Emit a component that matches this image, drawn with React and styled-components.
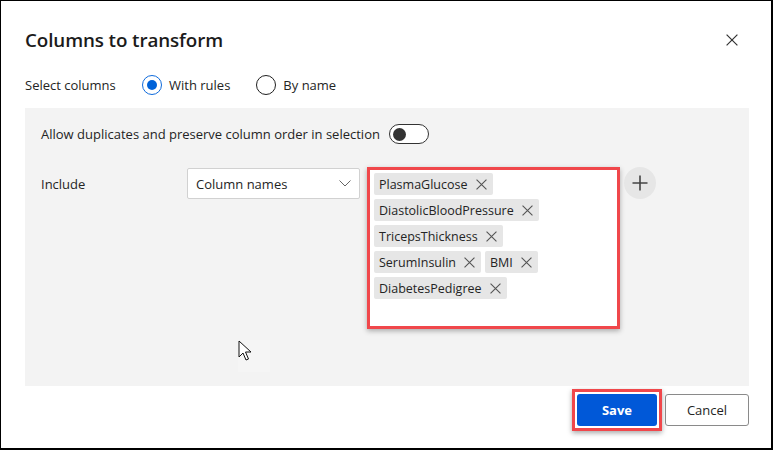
import styled, { createGlobalStyle } from 'styled-components';

const GlobalStyle = createGlobalStyle`
  html, body {
    margin: 0;
    padding: 0;
    background: #ffffff;
  }
  body {
    font-family: "Open Sans", "Noto Sans", "Liberation Sans", sans-serif;
    color: #242424;
  }
`;

const Frame = styled.div`
  box-sizing: border-box;
  width: 773px;
  height: 450px;
  border-top: 1px solid #000;
  border-left: 1px solid #000;
  border-right: 2px solid #000;
  border-bottom: 2px solid #000;
  padding: 26px 22px 0 24px;
  display: flex;
  flex-direction: column;
  background: #fff;
`;

const Header = styled.div`
  display: flex;
  align-items: center;
  justify-content: space-between;
  height: 26px;
`;

const Title = styled.h1`
  margin: 0;
  font-size: 18.8px;
  font-weight: 600;
  color: #1b1b1b;
  letter-spacing: -0.1px;
`;

const CloseButton = styled.button`
  border: none;
  background: none;
  padding: 0;
  margin-right: 10px;
  width: 14px;
  height: 14px;
  display: flex;
  align-items: center;
  justify-content: center;
  color: #333;
`;

const SelectRow = styled.div`
  display: flex;
  align-items: center;
  height: 20px;
  margin-top: 22px;
  font-size: 13px;
`;

const FieldLabel = styled.span`
  width: 117px;
  color: #242424;
`;

const RadioOption = styled.label`
  display: flex;
  align-items: center;
  gap: 7px;
  margin-right: 26px;
  color: #242424;
`;

const RadioCircle = styled.span`
  box-sizing: border-box;
  width: 20px;
  height: 20px;
  border-radius: 50%;
  border: ${p => (p.checked ? '1.5px solid #0f6bdc' : '1px solid #1f1f1f')};
  display: flex;
  align-items: center;
  justify-content: center;

  &::after {
    content: '';
    display: ${p => (p.checked ? 'block' : 'none')};
    width: 10px;
    height: 10px;
    border-radius: 50%;
    background: #0062d8;
  }
`;

const Panel = styled.div`
  position: relative;
  box-sizing: border-box;
  margin-top: 13px;
  height: 278px;
  width: 724px;
  background: #f3f3f3;
  padding: 16px 16px;
`;

const ToggleRow = styled.div`
  display: flex;
  align-items: center;
  gap: 9px;
  height: 20px;
  font-size: 13px;
`;

const Toggle = styled.span`
  box-sizing: border-box;
  width: 40px;
  height: 20px;
  border-radius: 10px;
  border: 1px solid #333;
  background: #fff;
  display: flex;
  align-items: center;
  padding-left: 3px;

  &::after {
    content: '';
    width: 13px;
    height: 13px;
    border-radius: 50%;
    background: #333;
  }
`;

const IncludeRow = styled.div`
  display: flex;
  align-items: flex-start;
  margin-top: 23px;
  font-size: 13px;
`;

const IncludeLabel = styled.span`
  width: 146px;
  line-height: 34px;
`;

const Dropdown = styled.div`
  box-sizing: border-box;
  width: 173px;
  height: 31px;
  margin-top: 1px;
  background: #fff;
  border: 1px solid #d1d1d1;
  border-radius: 2px;
  display: flex;
  align-items: center;
  justify-content: space-between;
  padding: 0 8px 0 8px;
  color: #242424;
`;

const Highlight = styled.div`
  border: 3px solid #f0474b;
  box-shadow: 0 2px 5px rgba(0, 0, 0, 0.3);
  margin-left: 7px;
`;

const TagBox = styled.div`
  box-sizing: border-box;
  width: 247px;
  height: 156px;
  background: #fff;
  padding: 3px 4px;
  display: flex;
  flex-direction: column;
  gap: 4px;
`;

const TagRow = styled.div`
  display: flex;
  gap: 4px;
`;

const Tag = styled.span`
  display: inline-flex;
  align-items: center;
  height: 22px;
  background: #e6e6e6;
  border-radius: 2px;
  padding: 0 6px 0 5px;
  gap: 8px;
  font-size: 12.5px;
  color: #242424;
`;

const AddButton = styled.button`
  width: 32px;
  height: 32px;
  margin-left: 4px;
  border-radius: 50%;
  border: none;
  background: #e6e6e6;
  display: flex;
  align-items: center;
  justify-content: center;
  padding: 0;
`;

const CursorSpot = styled.div`
  position: absolute;
  left: 213px;
  top: 232px;
  width: 32px;
  height: 32px;
  background: #f5f5f5;
`;

const Footer = styled.div`
  display: flex;
  justify-content: flex-end;
  align-items: center;
  gap: 3px;
  margin-top: 3px;
  width: 724px;
`;

const SaveHighlight = styled.div`
  border: 3px solid #f0474b;
  padding: 2px;
  background: #fff;
  box-shadow: 0 2px 5px rgba(0, 0, 0, 0.35);
`;

const Button = styled.button`
  box-sizing: border-box;
  height: 32px;
  width: ${p => p.width}px;
  border-radius: 3px;
  font-family: "Open Sans", "Noto Sans", sans-serif;
  font-size: 13px;
  font-weight: ${p => (p.primary ? 700 : 400)};
  color: ${p => (p.primary ? '#fff' : '#242424')};
  background: ${p => (p.primary ? '#0058d8' : '#fff')};
  border: ${p => (p.primary ? 'none' : '1px solid #8a8a8a')};
  display: block;
`;

const XIcon = ({ size = 10, color = '#444', stroke = 1 }) => (
  <svg width={size} height={size} viewBox="0 0 10 10">
    <path d="M0.5 0.5 L9.5 9.5 M9.5 0.5 L0.5 9.5" stroke={color} strokeWidth={stroke} fill="none" />
  </svg>
);

const Chevron = () => (
  <svg width="12" height="7" viewBox="0 0 12 7">
    <path d="M0.5 0.5 L6 6 L11.5 0.5" stroke="#666" strokeWidth="1" fill="none" />
  </svg>
);

const Plus = () => (
  <svg width="16" height="16" viewBox="0 0 16 16">
    <path d="M8 0.5 V15.5 M0.5 8 H15.5" stroke="#444" strokeWidth="1.6" fill="none" />
  </svg>
);

const Cursor = styled.svg`
  position: absolute;
  left: 213px;
  top: 232px;
`;

const rows = [
  ['PlasmaGlucose'],
  ['DiastolicBloodPressure'],
  ['TricepsThickness'],
  ['SerumInsulin', 'BMI'],
  ['DiabetesPedigree'],
];

export default function App() {
  return (
    <>
      <GlobalStyle />
      <Frame>
        <Header>
          <Title>Columns to transform</Title>
          <CloseButton aria-label="Close">
            <XIcon size={12} color="#333" />
          </CloseButton>
        </Header>

        <SelectRow>
          <FieldLabel>Select columns</FieldLabel>
          <RadioOption>
            <RadioCircle checked />
            With rules
          </RadioOption>
          <RadioOption>
            <RadioCircle />
            By name
          </RadioOption>
        </SelectRow>

        <Panel>
          <ToggleRow>
            Allow duplicates and preserve column order in selection
            <Toggle />
          </ToggleRow>

          <IncludeRow>
            <IncludeLabel>Include</IncludeLabel>
            <Dropdown>
              Column names
              <Chevron />
            </Dropdown>
            <Highlight>
              <TagBox>
                {rows.map(row => (
                  <TagRow key={row[0]}>
                    {row.map(name => (
                      <Tag key={name}>
                        {name}
                        <XIcon size={11} color="#555" />
                      </Tag>
                    ))}
                  </TagRow>
                ))}
              </TagBox>
            </Highlight>
            <AddButton aria-label="Add">
              <Plus />
            </AddButton>
          </IncludeRow>

          <CursorSpot />
          <Cursor width="14" height="22" viewBox="0 0 14 22">
            <path
              d="M1 1 L1 17 L5 13 L8 20 L10.5 19 L7.5 12 L13 12 Z"
              fill="#fff"
              stroke="#111"
              strokeWidth="1"
              strokeLinejoin="round"
            />
          </Cursor>
        </Panel>

        <Footer>
          <SaveHighlight>
            <Button primary width={80}>Save</Button>
          </SaveHighlight>
          <Button width={84}>Cancel</Button>
        </Footer>
      </Frame>
    </>
  );
}
